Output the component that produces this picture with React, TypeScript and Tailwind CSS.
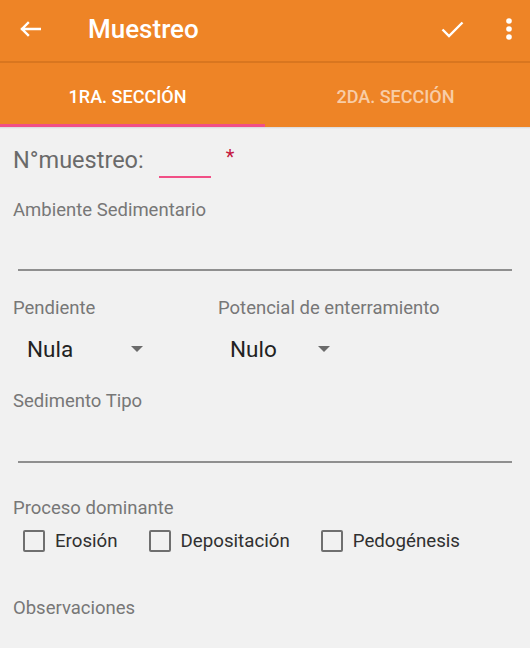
const font = { fontFamily: "Roboto, 'Noto Sans', sans-serif" };

function Label({ text, className = "" }: { text: string; className?: string }) {
  return <div className={`text-[18.5px] leading-[24px] text-[#777] ${className}`}>{text}</div>;
}

function Dropdown({ label, value, width, inset }: { label: string; value: string; width: string; inset: string }) {
  return (
    <div className="flex flex-col">
      <Label text={label} />
      <div className={`mt-[14px] flex items-center ${inset}`}>
        <span className={`${width} text-[22.5px] leading-[30px] text-[#222]`}>{value}</span>
        <span className="h-0 w-0 border-x-[6px] border-t-[6px] border-x-transparent border-t-[#6b6b6b]" />
      </div>
    </div>
  );
}

function CheckItem({ label }: { label: string }) {
  return (
    <label className="flex items-center gap-[10px]">
      <span className="h-[22px] w-[22px] rounded-[2px] border-2 border-[#6f6f6f]" />
      <span className="text-[18.7px] leading-[24px] text-[#303030]">{label}</span>
    </label>
  );
}

export default function App() {
  return (
    <div className="h-[648px] w-[530px] overflow-hidden bg-[#f1f1f1]" style={font}>
      <header className="bg-[#ee8426]">
        <div className="flex h-[63px] items-center border-b-2 border-[#d9761f] pb-[3px] pl-[19px] pr-[18px] text-white">
          <svg width="22" height="16" viewBox="0 0 22 16" fill="none" stroke="white" strokeWidth="2.4" strokeLinecap="square">
            <path d="M21 8H3M9 2L3 8l6 6" />
          </svg>
          <h1 className="ml-[47px] flex-1 text-[26px] font-medium">Muestreo</h1>
          <svg width="23" height="17" viewBox="0 0 23 17" fill="none" stroke="white" strokeWidth="2.4">
            <path d="M1.5 8.5l6.5 6.5L21.5 1.5" />
          </svg>
          <svg width="6" height="22" viewBox="0 0 6 22" fill="white" className="ml-[42px]">
            <circle cx="3" cy="3" r="2.8" />
            <circle cx="3" cy="11" r="2.8" />
            <circle cx="3" cy="19" r="2.8" />
          </svg>
        </div>
        <nav className="flex h-[64px]">
          <div className="flex w-1/2 flex-col">
            <div className="flex flex-1 items-center justify-center pr-[10px] pt-[5px] text-[18px] font-medium text-white">
              1RA. SECCIÓN
            </div>
            <div className="h-[3px] bg-[#f14f86]" />
          </div>
          <div className="flex w-1/2 items-center justify-center pb-[3px] pr-[4px] pt-[5px] text-[18px] font-medium text-white/60">
            2DA. SECCIÓN
          </div>
        </nav>
      </header>
      <div className="h-[2px] bg-gradient-to-b from-[#d8d8d8] to-[#f1f1f1]" />

      <main className="flex flex-col">
        <div className="flex items-start pl-[13px] pt-[16px]">
          <span className="text-[23.5px] leading-[30px] text-[#6a6a6a]">N°muestreo:</span>
          <span className="ml-[15px] mt-[31px] h-[2px] w-[52px] bg-[#f14f86]" />
          <span className="ml-[15px] mt-[2px] text-[20px] leading-[20px] text-[#c4173f]">*</span>
        </div>

        <Label text="Ambiente Sedimentario" className="ml-[13px] mt-[20px]" />
        <div className="mx-[18px] mt-[47px] h-[2px] bg-[#8f8f8f]" />

        <div className="mt-[25px] flex pl-[13px]">
          <div className="w-[205px]">
            <Dropdown label="Pendiente" value="Nula" width="w-[104px]" inset="pl-[14px]" />
          </div>
          <Dropdown label="Potencial de enterramiento" value="Nulo" width="w-[88px]" inset="pl-[12px]" />
        </div>

        <Label text="Sedimento Tipo" className="ml-[13px] mt-[25px]" />
        <div className="mx-[18px] mt-[48px] h-[2px] bg-[#8f8f8f]" />

        <Label text="Proceso dominante" className="ml-[13px] mt-[33px]" />
        <div className="ml-[23px] mt-[9px] flex gap-[31px]">
          <CheckItem label="Erosión" />
          <CheckItem label="Depositación" />
          <CheckItem label="Pedogénesis" />
        </div>

        <Label text="Observaciones" className="ml-[13px] mt-[43px]" />
      </main>
    </div>
  );
}
